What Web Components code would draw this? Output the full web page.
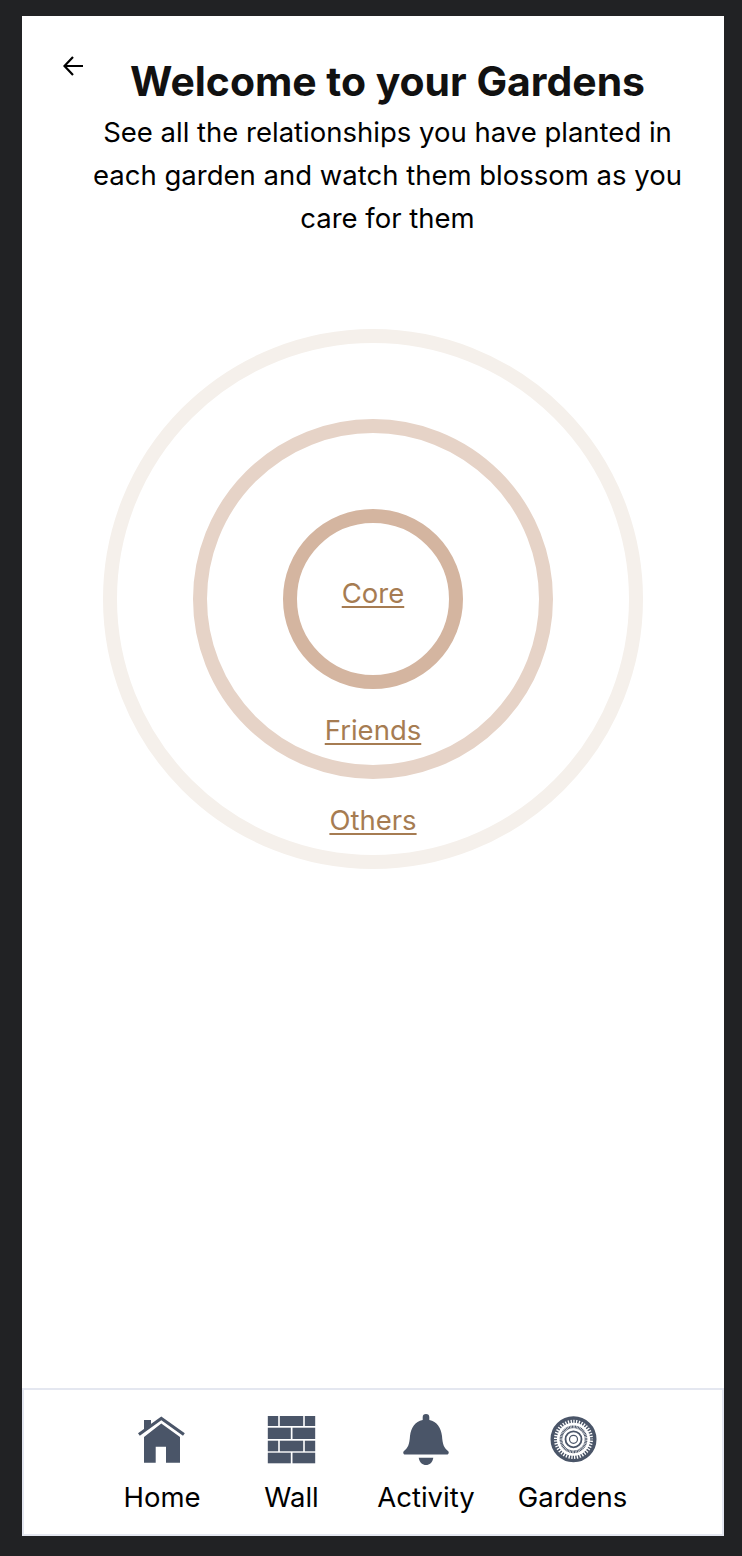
<!DOCTYPE html>
<html lang="en">
<head>
<meta charset="utf-8">
<title>Gardens</title>
<style>
  html, body { margin: 0; background: #212224; }
  body { font-family: Inter, "Liberation Sans", sans-serif; }
</style>
</head>
<body>
<garden-app>
  <garden-header title="Welcome to your Gardens">See all the relationships you have planted in each garden and watch them blossom as you care for them</garden-header>
  <garden-rings></garden-rings>
  <bottom-nav>
    <nav-item label="Home" icon="home" style="width:130px"></nav-item>
    <nav-item label="Wall" icon="wall" style="width:129px"></nav-item>
    <nav-item label="Activity" icon="bell" style="width:140px"></nav-item>
    <nav-item label="Gardens" icon="garden" style="width:153px"></nav-item>
  </bottom-nav>
</garden-app>

<script>
class GardenApp extends HTMLElement {
  constructor() {
    super();
    this.attachShadow({ mode: 'open' });
    this.shadowRoot.innerHTML = `
      <style>
        :host {
          display: flex;
          flex-direction: column;
          box-sizing: border-box;
          width: 702px;
          height: 1520px;
          margin: 16px 18px 20px 22px;
          background: #fff;
        }
      </style>
      <slot></slot>`;
  }
}

class GardenHeader extends HTMLElement {
  constructor() {
    super();
    this.attachShadow({ mode: 'open' });
    this.shadowRoot.innerHTML = `
      <style>
        :host { display: flex; height: 313px; box-sizing: border-box; padding: 39px 33px 0 41px; }
        .back { flex: none; width: 21px; height: 22px; }
        .text { flex: 1; text-align: center; }
        h1 { margin: 4px 0 8px; font-size: 40.9px; line-height: 44px; font-weight: 700; color: #111; }
        p { margin: 0; font-size: 27.5px; line-height: 43px; color: #000; }
      </style>
      <svg class="back" viewBox="0 0 21 22" fill="none" stroke="#000" stroke-width="2.200">
        <path d="M20 11H2M10 2 1.500 11l8.500 9"/>
      </svg>
      <div class="text">
        <h1></h1>
        <p><slot></slot></p>
      </div>`;
    this.shadowRoot.querySelector('h1').textContent = this.getAttribute('title');
  }
}

class GardenRing extends HTMLElement {
  constructor() {
    super();
    this.attachShadow({ mode: 'open' });
    this.shadowRoot.innerHTML = `
      <style>
        :host {
          display: grid;
          box-sizing: border-box;
          justify-items: center;
          align-items: center;
          border-radius: 50%;
          border: 14px solid var(--ring);
          width: var(--size);
          height: var(--size);
        }
        ::slotted(*) { grid-area: 1 / 1; }
      </style>
      <slot></slot>`;
  }
}

class RingLabel extends HTMLElement {
  constructor() {
    super();
    this.attachShadow({ mode: 'open' });
    this.shadowRoot.innerHTML = `
      <style>
        :host {
          display: block;
          font-size: 27.5px;
          line-height: 32px;
          color: #a67c52;
          text-decoration: underline 2px;
          text-underline-offset: 3px;
        }
      </style>
      <slot></slot>`;
  }
}

class GardenRings extends HTMLElement {
  constructor() {
    super();
    this.attachShadow({ mode: 'open' });
    this.shadowRoot.innerHTML = `
      <style>
        :host { display: flex; justify-content: center; flex: 1; }
        .others, .friends { align-self: end; margin-bottom: 19px; }
        .core { margin-bottom: 12px; }
      </style>
      <garden-ring style="--size:540px;--ring:#f5f0eb">
        <garden-ring style="--size:360px;--ring:#e6d3c7">
          <garden-ring style="--size:180px;--ring:#d4b5a0">
            <ring-label class="core">Core</ring-label>
          </garden-ring>
          <ring-label class="friends">Friends</ring-label>
        </garden-ring>
        <ring-label class="others">Others</ring-label>
      </garden-ring>`;
  }
}

const ICONS = {
  home: `<g fill="#4a5568">
           <path d="M7 5h7v4.500L7 15z"/>
           <path d="M24.300 1.500 47.800 18.300 46 20.700 24.300 5.300 2.800 20.700 1 18.300z"/>
           <path d="M24.300 8.500 43 22v25.700H29V31.700H18.700v16H7V22z"/>
         </g>`,
  wall: `<g fill="#4a5568">
           <rect x=".8" y="1" width="10.400" height="10"/><rect x="12.800" y="1" width="23.400" height="10"/><rect x="37.800" y="1" width="10.400" height="10"/>
           <rect x=".8" y="12.700" width="23" height="11.300"/><rect x="25.500" y="12.700" width="22.700" height="11.300"/>
           <rect x=".8" y="25.700" width="10.400" height="10.600"/><rect x="12.800" y="25.700" width="23.400" height="10.600"/><rect x="37.800" y="25.700" width="10.400" height="10.600"/>
           <rect x=".8" y="37.700" width="23" height="10.600"/><rect x="25.500" y="37.700" width="22.700" height="10.600"/>
         </g>`,
  bell: `<g fill="#4a5568">
           <path d="M25-1a3.300 3.300 0 0 1 3.300 3.300V5C36 6.500 40 13 41 21c.5 8 2 12 6 15 1.500 1.500.5 3.500-1 3.500H4c-1.500 0-2.500-2-1-3.500 4-3 5.500-7 6-15 1-8 5-14.500 12.700-16V2.300A3.300 3.300 0 0 1 25-1z"/>
           <path d="M17.700 42.700h14.600C31.500 47.500 28.500 50 25 50s-6.500-2.500-7.300-7.300z"/>
         </g>`,
  garden: `<g fill="none" stroke="#4a5568">
             <circle cx="25.500" cy="24.300" r="21.300" stroke-width="3.400"/>
             <circle cx="25.500" cy="24.300" r="18.300" stroke-width="3.500" stroke-dasharray="1.500 1.300"/>
             <circle cx="25.500" cy="24.300" r="12.500" stroke-width="2.800" stroke-dasharray="1 .5"/>
             <circle cx="25.500" cy="24.300" r="8" stroke-width="1.800"/>
             <circle cx="25.500" cy="24.300" r="4" stroke-width="1.200"/>
           </g>`,
};

class NavItem extends HTMLElement {
  constructor() {
    super();
    this.attachShadow({ mode: 'open' });
    this.shadowRoot.innerHTML = `
      <style>
        :host {
          display: flex;
          flex-direction: column;
          align-items: center;
          font-size: 27.5px;
          line-height: 32px;
          color: #000;
        }
        svg { width: 50px; height: 50px; margin-bottom: 16px; overflow: visible; }
      </style>
      <svg viewBox="0 0 50 50">${ICONS[this.getAttribute('icon')]}</svg>
      <span>${this.getAttribute('label')}</span>`;
  }
}

class BottomNav extends HTMLElement {
  constructor() {
    super();
    this.attachShadow({ mode: 'open' });
    this.shadowRoot.innerHTML = `
      <style>
        :host {
          display: flex;
          justify-content: center;
          box-sizing: border-box;
          height: 148px;
          padding-top: 25px;
          border: 2px solid #e4e7f0;
        }
      </style>
      <slot></slot>`;
  }
}

customElements.define('garden-app', GardenApp);
customElements.define('garden-header', GardenHeader);
customElements.define('garden-ring', GardenRing);
customElements.define('ring-label', RingLabel);
customElements.define('garden-rings', GardenRings);
customElements.define('nav-item', NavItem);
customElements.define('bottom-nav', BottomNav);
</script>
</body>
</html>
